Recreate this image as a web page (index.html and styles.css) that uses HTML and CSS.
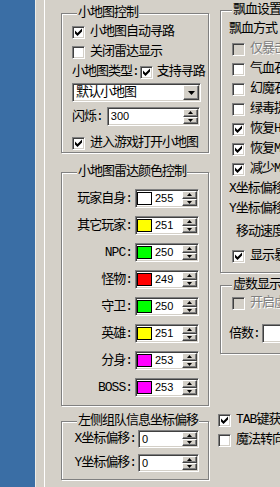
FILE: index.html
```html
<!DOCTYPE html>
<html lang="zh-CN">
<head>
  <meta charset="UTF-8">
  <title>小地图设置</title>
  <link rel="stylesheet" href="styles.css">
</head>
<body>
  <div class="screen">
    <div class="desk"></div>
    <div class="frame">
      <div class="tab">

        <div class="col col-left">
          <fieldset class="group g-map">
            <legend>小地图控制</legend>
            <div class="row"><span class="check"><svg width="7" height="8" viewBox="0 0 7 8"><path d="M0 2.5L2.5 5L7 0.5V3.5L2.5 8L0 5.5Z"/></svg></span>小地图自动寻路</div>
            <div class="row"><span class="check"></span>关闭雷达显示</div>
            <div class="row">小地图类型:<span class="check check-tight"><svg width="7" height="8" viewBox="0 0 7 8"><path d="M0 2.5L2.5 5L7 0.5V3.5L2.5 8L0 5.5Z"/></svg></span>支持寻路</div>
            <div class="select">
              <span class="select-text">默认小地图</span>
              <span class="btn drop"><svg width="7" height="4" viewBox="0 0 7 4"><path d="M0 0H7L3.5 4Z"/></svg></span>
            </div>
            <div class="row row-field">
              闪烁:
              <div class="field field-flash">
                <span class="num">300</span>
                <span class="spin">
                  <span class="btn"><svg width="5" height="3" viewBox="0 0 5 3"><path d="M0 3L2.5 0L5 3Z"/></svg></span>
                  <span class="btn"><svg width="5" height="3" viewBox="0 0 5 3"><path d="M0 0H5L2.5 3Z"/></svg></span>
                </span>
              </div>
            </div>
            <div class="row row-last"><span class="check"><svg width="7" height="8" viewBox="0 0 7 8"><path d="M0 2.5L2.5 5L7 0.5V3.5L2.5 8L0 5.5Z"/></svg></span>进入游戏打开小地图</div>
          </fieldset>

          <fieldset class="group g-color">
            <legend>小地图雷达颜色控制</legend>
            <div class="crow">
              <span class="clabel">玩家自身:</span>
              <div class="field field-color"><span class="swatch sw-white"></span><span class="num">255</span>
                <span class="spin"><span class="btn"><svg width="5" height="3" viewBox="0 0 5 3"><path d="M0 3L2.5 0L5 3Z"/></svg></span><span class="btn"><svg width="5" height="3" viewBox="0 0 5 3"><path d="M0 0H5L2.5 3Z"/></svg></span></span>
              </div>
            </div>
            <div class="crow">
              <span class="clabel">其它玩家:</span>
              <div class="field field-color"><span class="swatch sw-yellow"></span><span class="num">251</span>
                <span class="spin"><span class="btn"><svg width="5" height="3" viewBox="0 0 5 3"><path d="M0 3L2.5 0L5 3Z"/></svg></span><span class="btn"><svg width="5" height="3" viewBox="0 0 5 3"><path d="M0 0H5L2.5 3Z"/></svg></span></span>
              </div>
            </div>
            <div class="crow">
              <span class="clabel">NPC:</span>
              <div class="field field-color"><span class="swatch sw-green"></span><span class="num">250</span>
                <span class="spin"><span class="btn"><svg width="5" height="3" viewBox="0 0 5 3"><path d="M0 3L2.5 0L5 3Z"/></svg></span><span class="btn"><svg width="5" height="3" viewBox="0 0 5 3"><path d="M0 0H5L2.5 3Z"/></svg></span></span>
              </div>
            </div>
            <div class="crow">
              <span class="clabel">怪物:</span>
              <div class="field field-color"><span class="swatch sw-red"></span><span class="num">249</span>
                <span class="spin"><span class="btn"><svg width="5" height="3" viewBox="0 0 5 3"><path d="M0 3L2.5 0L5 3Z"/></svg></span><span class="btn"><svg width="5" height="3" viewBox="0 0 5 3"><path d="M0 0H5L2.5 3Z"/></svg></span></span>
              </div>
            </div>
            <div class="crow">
              <span class="clabel">守卫:</span>
              <div class="field field-color"><span class="swatch sw-green"></span><span class="num">250</span>
                <span class="spin"><span class="btn"><svg width="5" height="3" viewBox="0 0 5 3"><path d="M0 3L2.5 0L5 3Z"/></svg></span><span class="btn"><svg width="5" height="3" viewBox="0 0 5 3"><path d="M0 0H5L2.5 3Z"/></svg></span></span>
              </div>
            </div>
            <div class="crow">
              <span class="clabel">英雄:</span>
              <div class="field field-color"><span class="swatch sw-yellow"></span><span class="num">251</span>
                <span class="spin"><span class="btn"><svg width="5" height="3" viewBox="0 0 5 3"><path d="M0 3L2.5 0L5 3Z"/></svg></span><span class="btn"><svg width="5" height="3" viewBox="0 0 5 3"><path d="M0 0H5L2.5 3Z"/></svg></span></span>
              </div>
            </div>
            <div class="crow">
              <span class="clabel">分身:</span>
              <div class="field field-color"><span class="swatch sw-pink"></span><span class="num">253</span>
                <span class="spin"><span class="btn"><svg width="5" height="3" viewBox="0 0 5 3"><path d="M0 3L2.5 0L5 3Z"/></svg></span><span class="btn"><svg width="5" height="3" viewBox="0 0 5 3"><path d="M0 0H5L2.5 3Z"/></svg></span></span>
              </div>
            </div>
            <div class="crow">
              <span class="clabel">BOSS:</span>
              <div class="field field-color"><span class="swatch sw-pink"></span><span class="num">253</span>
                <span class="spin"><span class="btn"><svg width="5" height="3" viewBox="0 0 5 3"><path d="M0 3L2.5 0L5 3Z"/></svg></span><span class="btn"><svg width="5" height="3" viewBox="0 0 5 3"><path d="M0 0H5L2.5 3Z"/></svg></span></span>
              </div>
            </div>
          </fieldset>

          <fieldset class="group g-team">
            <legend>左侧组队信息坐标偏移</legend>
            <div class="trow">
              <span class="clabel">X坐标偏移:</span>
              <div class="field field-team"><span class="num">0</span>
                <span class="spin"><span class="btn"><svg width="5" height="3" viewBox="0 0 5 3"><path d="M0 3L2.5 0L5 3Z"/></svg></span><span class="btn"><svg width="5" height="3" viewBox="0 0 5 3"><path d="M0 0H5L2.5 3Z"/></svg></span></span>
              </div>
            </div>
            <div class="trow">
              <span class="clabel">Y坐标偏移:</span>
              <div class="field field-team"><span class="num">0</span>
                <span class="spin"><span class="btn"><svg width="5" height="3" viewBox="0 0 5 3"><path d="M0 3L2.5 0L5 3Z"/></svg></span><span class="btn"><svg width="5" height="3" viewBox="0 0 5 3"><path d="M0 0H5L2.5 3Z"/></svg></span></span>
              </div>
            </div>
          </fieldset>
        </div>

        <div class="col col-right">
          <fieldset class="group g-blood">
            <legend>飘血设置</legend>
            <div class="row row-text">飘血方式</div>
            <div class="row row-check disabled"><span class="check check-off"></span>仅暴击显示</div>
            <div class="row row-check"><span class="check"></span>气血石提示</div>
            <div class="row row-check"><span class="check"></span>幻魔石提示</div>
            <div class="row row-check"><span class="check"></span>绿毒提示</div>
            <div class="row row-check"><span class="check"><svg width="7" height="8" viewBox="0 0 7 8"><path d="M0 2.5L2.5 5L7 0.5V3.5L2.5 8L0 5.5Z"/></svg></span>恢复HP</div>
            <div class="row row-check"><span class="check"><svg width="7" height="8" viewBox="0 0 7 8"><path d="M0 2.5L2.5 5L7 0.5V3.5L2.5 8L0 5.5Z"/></svg></span>恢复MP</div>
            <div class="row row-check"><span class="check"><svg width="7" height="8" viewBox="0 0 7 8"><path d="M0 2.5L2.5 5L7 0.5V3.5L2.5 8L0 5.5Z"/></svg></span>减少MP</div>
            <div class="row row-text">X坐标偏移:</div>
            <div class="row row-text">Y坐标偏移:</div>
            <div class="row row-text row-speed">移动速度:</div>
            <div class="row row-check row-show"><span class="check"><svg width="7" height="8" viewBox="0 0 7 8"><path d="M0 2.5L2.5 5L7 0.5V3.5L2.5 8L0 5.5Z"/></svg></span>显示暴击</div>
          </fieldset>

          <fieldset class="group g-virtual">
            <legend>虚数显示项</legend>
            <div class="row row-check disabled"><span class="check check-off"></span>开启虚数</div>
            <div class="row row-text row-times">倍数:<div class="field field-times"></div></div>
          </fieldset>

          <div class="row row-loose row-tab"><span class="check"><svg width="7" height="8" viewBox="0 0 7 8"><path d="M0 2.5L2.5 5L7 0.5V3.5L2.5 8L0 5.5Z"/></svg></span>TAB键获取目标</div>
          <div class="row row-loose"><span class="check"></span>魔法转向</div>
        </div>

      </div>
    </div>
  </div>
</body>
</html>
```

FILE: styles.css
```css
* {
  box-sizing: border-box;
}
body {
  margin: 0;
  width: 280px;
  height: 487px;
  overflow: hidden;
  background-color: #d4d0c8;
  color: #000;
  font-family: "Liberation Mono", "Noto Sans CJK SC", monospace;
  font-size: 13px;
  letter-spacing: -1px;
  line-height: 16px;
}
.screen {
  display: flex;
  height: 487px;
}
.desk {
  width: 35px;
  flex: none;
  background-color: #3a6ea5;
}
.frame {
  flex: 1;
  display: flex;
  border-left: 1px solid #ecebe6;
  padding-left: 8px;
}
.tab {
  flex: 1;
  display: flex;
  gap: 9px;
  border-left: 1px solid #fff;
  padding-left: 16px;
}
.col {
  flex: none;
  display: flex;
  flex-direction: column;
}
.col-left {
  width: 148px;
}
.col-right {
  width: 150px;
}

/* group boxes */
.group {
  margin: 0;
  padding: 0;
  min-width: 0;
  border: 1px solid #808080;
  box-shadow: 1px 1px 0 #fff, inset 1px 1px 0 #fff;
}
.group legend {
  margin-left: 5px;
  padding: 0 1px;
  line-height: 16px;
  background-color: #d4d0c8;
  white-space: nowrap;
}
.g-map {
  margin-top: 5px;
  padding: 1px 8px 0 10px;
}
.g-color {
  margin-top: 11px;
  padding: 9px 9px 8px 10px;
  display: flex;
  flex-direction: column;
  gap: 8px;
}
.g-team {
  margin-top: 7px;
  padding: 1px 9px 7px 10px;
  display: flex;
  flex-direction: column;
  gap: 6px;
}
.g-blood {
  margin: 2px 0 0 2px;
  padding: 1px 0 6px 8px;
}
.g-blood legend {
  margin-left: 3px;
}
.g-virtual {
  margin: 4px 0 0 2px;
  padding: 0 0 10px 8px;
}
.g-virtual legend {
  margin-left: 3px;
}

/* rows */
.row {
  display: flex;
  align-items: center;
  height: 20px;
  white-space: nowrap;
}
.row-last {
  height: 18px;
  margin-top: 8px;
}
.row-field {
  height: 19px;
  margin-top: 5px;
}
.row-check {
  padding-left: 3px;
}
.row-speed {
  margin-top: 3px;
  padding-left: 7px;
}
.row-show {
  margin-top: 4px;
}
.row-times {
  height: 19px;
  margin-top: 11px;
}
.row-tab {
  margin-top: 56px;
}
.disabled {
  color: #808080;
  text-shadow: 1px 1px 0 #fff;
}

/* checkbox */
.check {
  flex: none;
  width: 13px;
  height: 13px;
  margin-right: 5px;
  display: flex;
  align-items: center;
  justify-content: center;
  background-color: #fff;
  border: 1px solid;
  border-color: #808080 #fff #fff #808080;
  box-shadow: inset 1px 1px 0 #404040, inset -1px -1px 0 #d4d0c8;
}
.check-tight {
  margin-left: 1px;
  margin-right: 4px;
}
.check-off {
  background-color: #d4d0c8;
}
.check svg {
  fill: #000;
}

/* sunken inputs */
.field,
.select {
  display: flex;
  align-items: stretch;
  background-color: #fff;
  border: 1px solid;
  border-color: #808080 #fff #fff #808080;
  box-shadow: inset 1px 1px 0 #404040, inset -1px -1px 0 #d4d0c8;
  padding: 2px 2px 2px 2px;
}
.select {
  height: 19px;
  margin-top: 1px;
  margin-right: -1px;
}
.select-text {
  flex: 1;
  padding-left: 1px;
  line-height: 13px;
}
.field-flash {
  flex: 1;
  height: 19px;
  margin-left: 4px;
}
.field-color {
  width: 64px;
  height: 19px;
}
.field-team {
  width: 61px;
  height: 18px;
}
.field-times {
  width: 60px;
  height: 19px;
  margin-left: 2px;
}
.num {
  flex: 1;
  padding-left: 1px;
  font-family: "Liberation Sans", sans-serif;
  font-size: 11px;
  letter-spacing: 0;
  line-height: 13px;
}
.swatch {
  flex: none;
  width: 15px;
  margin: 0 2px 0 -1px;
  border: 1px solid #000;
}
.sw-white { background-color: #fff; }
.sw-yellow { background-color: #ffff00; }
.sw-green { background-color: #00ff00; }
.sw-red { background-color: #ff0000; }
.sw-pink { background-color: #ff00ff; }

/* raised buttons */
.btn {
  display: flex;
  align-items: center;
  justify-content: center;
  background-color: #d4d0c8;
  border: 1px solid;
  border-color: #fff #404040 #404040 #fff;
  box-shadow: inset -1px -1px 0 #808080;
}
.btn svg {
  fill: #000;
}
.drop {
  width: 16px;
  margin: -1px -1px -1px 0;
}
.spin {
  flex: none;
  width: 15px;
  margin: -1px -1px -1px 0;
  display: flex;
  flex-direction: column;
}
.spin .btn {
  flex: 1;
}

/* label + field rows */
.crow,
.trow {
  display: flex;
  align-items: center;
  white-space: nowrap;
}
.clabel {
  flex: 1;
  text-align: right;
  margin-right: 3px;
}
.trow .clabel {
  margin-right: 2px;
}
```
